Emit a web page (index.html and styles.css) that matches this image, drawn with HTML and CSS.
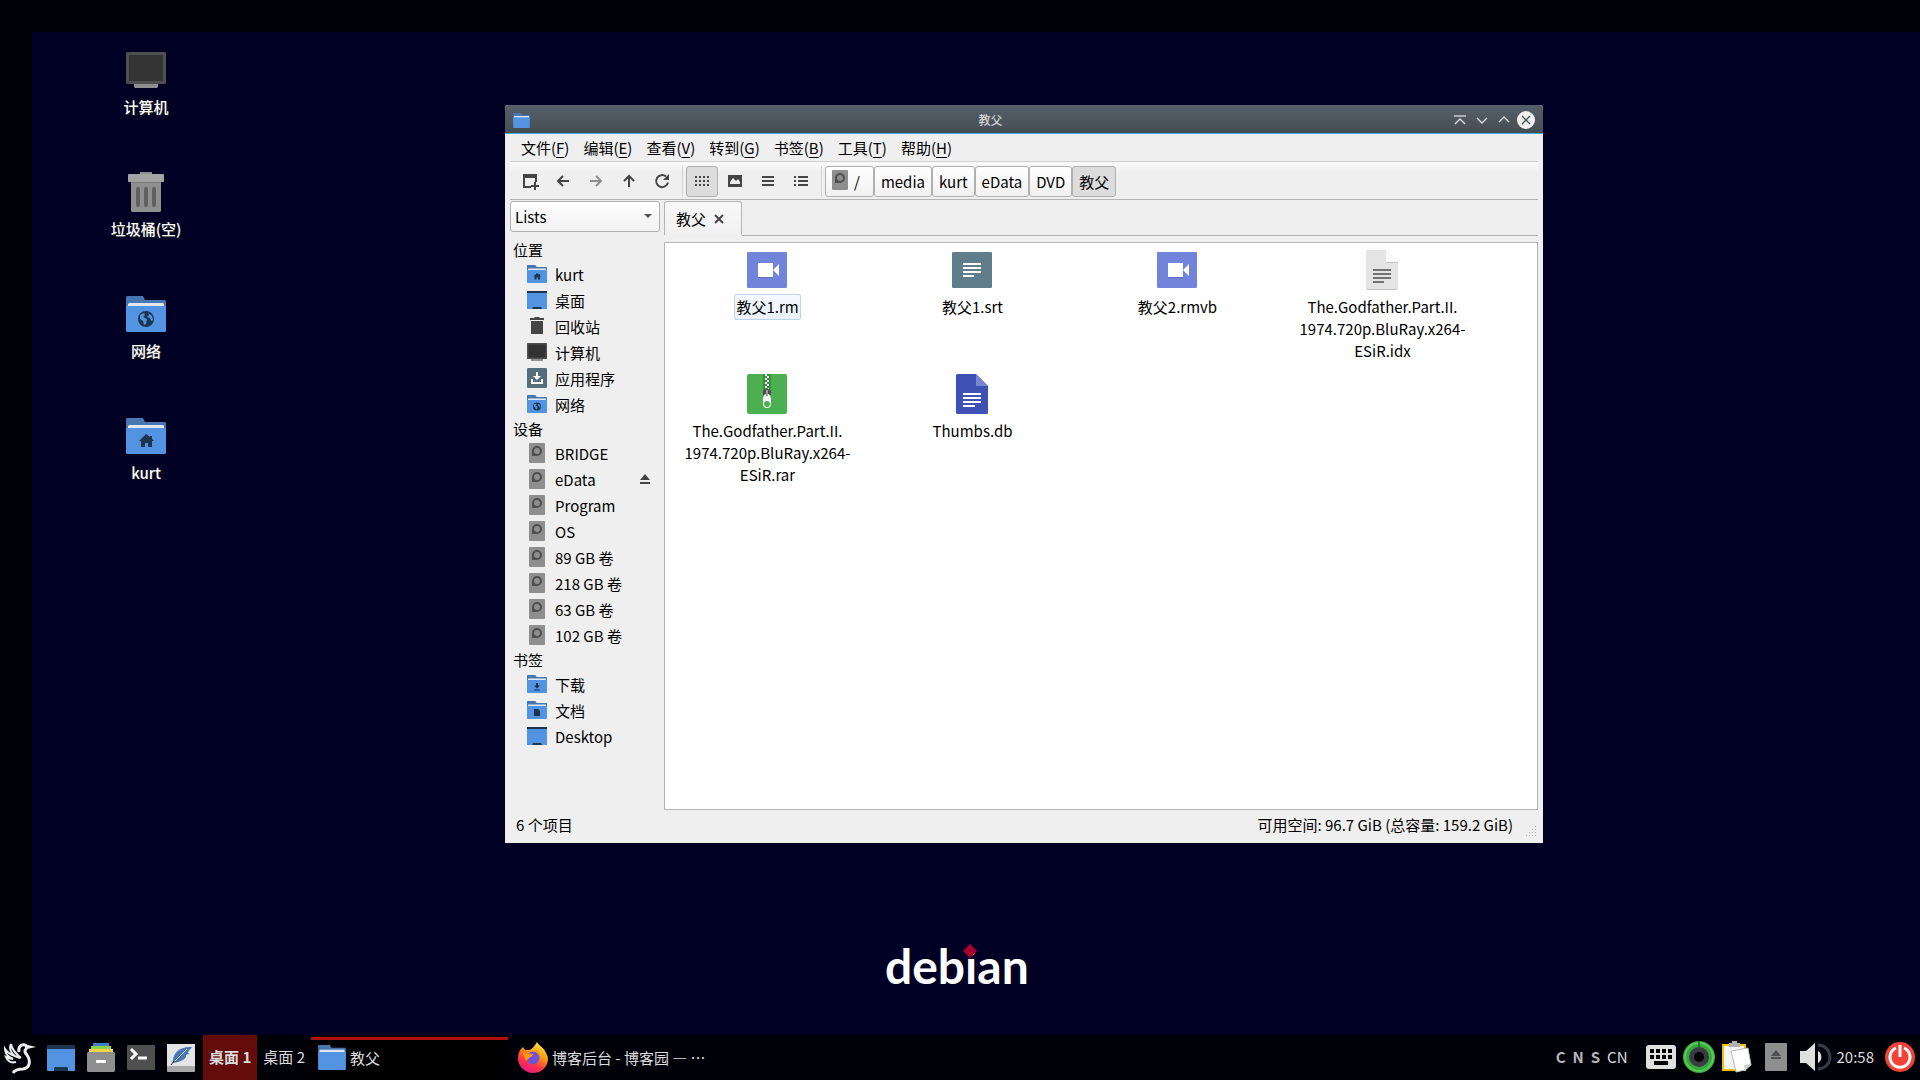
FILE: index.html
```html
<!DOCTYPE html>
<html lang="zh-CN">
<head>
    <meta charset="UTF-8">
    <meta name="viewport" content="width=device-width, initial-scale=1.0">
    <title>教父</title>
    <link rel="stylesheet" href="styles.css">
</head>
<body>

<!-- Shared icons -->
<svg class="sprite" width="0" height="0" aria-hidden="true">
    <symbol id="folder" viewBox="0 0 40 36">
        <path fill="#4877b1" d="M1 0h16l2 4h20l1 1v14H0V1z"/>
        <path fill="#e4e9f0" d="M3 7h34l1 1v4H2V8z"/>
        <path fill="#5294e2" d="M0 10h40v25l-1 1H1l-1-1z"/>
    </symbol>
    <symbol id="folder-home" viewBox="0 0 40 36">
        <use href="#folder"/>
        <path fill="#1d344f" d="M20 16l-7 7h2v6h4v-4h3v4h4v-6h2l-2-2v-3h-2v1z"/>
    </symbol>
    <symbol id="folder-net" viewBox="0 0 40 36">
        <use href="#folder"/>
        <circle cx="20" cy="23" r="8" fill="#1d344f"/>
        <path fill="#5294e2" d="M14 19l4-2 1 2-2 2 4 2-1 5-2 1-1-4-3-2zM22 17l4 3 1 4-2 1-1-3-3-1 2-2z"/>
    </symbol>
    <symbol id="folder-down" viewBox="0 0 40 36">
        <use href="#folder"/>
        <path fill="#1d344f" d="M18 16h4v5h4l-6 6-6-6h4zM14 29h12v2H14z"/>
    </symbol>
    <symbol id="folder-doc" viewBox="0 0 40 36">
        <use href="#folder"/>
        <path fill="#1d344f" d="M14 16h8l4 4v10H14z"/>
    </symbol>
    <symbol id="screen" viewBox="0 0 20 18">
        <path fill="#5294e2" d="M0 0h20v18H0z"/>
        <path fill="#1d344f" d="M0 0h20v2H0zM5 18l1-2h8l1 2z"/>
    </symbol>
    <symbol id="computer" viewBox="0 0 40 36">
        <path fill="#8e8e8e" d="M8 32h24v3l-1 1H9l-1-1z"/>
        <rect width="40" height="32" rx="1" fill="#4f4f4f"/>
        <path fill="#333" d="M3 3h34v26H3z"/>
    </symbol>
    <symbol id="disk" viewBox="0 0 16 20">
        <rect width="16" height="20" rx="1" fill="#8e8e8e"/>
        <circle cx="8" cy="8" r="4" fill="none" stroke="#4f4f4f" stroke-width="2"/>
        <path fill="#4f4f4f" d="M3 8l4 4v1H3z"/>
    </symbol>
    <symbol id="video" viewBox="0 0 40 36">
        <rect width="40" height="36" rx="1" fill="#7283da"/>
        <path fill="#5f6fbd" d="M11 12h15v14H11z"/>
        <path fill="#fff" d="M11 11h15v14H11zM26 18l6-6v12z"/>
    </symbol>
</svg>

<main class="desktop">
    <nav class="shortcuts">
        <a href="#"><svg width="40" height="36"><use href="#computer"/></svg><span>计算机</span></a>
        <a href="#">
            <svg width="40" height="40" viewBox="0 0 40 40">
                <path fill="#8e8e8e" d="M5 9h30v30l-1 1H6l-1-1zM14 0h12v3H14z"/>
                <rect x="2" y="2" width="36" height="8" rx="1" fill="#a3a3a3"/>
                <path fill="#777" d="M5 10h30v1H5z"/>
                <path stroke="#606060" stroke-width="4" stroke-linecap="round" d="M12 17v16M20 17v16M28 17v16"/>
            </svg>
            <span>垃圾桶(空)</span>
        </a>
        <a href="#"><svg width="40" height="36"><use href="#folder-net"/></svg><span>网络</span></a>
        <a href="#"><svg width="40" height="36"><use href="#folder-home"/></svg><span>kurt</span></a>
    </nav>

    <div class="logo">debian</div>

    <section class="window">
        <header class="titlebar">
            <svg width="17" height="15"><use href="#folder"/></svg>
            <h1>教父</h1>
            <div class="window-buttons">
                <button type="button" aria-label="shade"><svg width="18" height="18" fill="none" stroke="#dfe3e5"><path stroke-width="2" stroke="#a9b0b4" d="M3 5h12"/><path stroke-width="1.3" d="M4 13l5-5 5 5"/></svg></button>
                <button type="button" aria-label="minimize"><svg width="18" height="18" fill="none" stroke="#dfe3e5" stroke-width="1.3"><path d="M4 7l5 5 5-5"/></svg></button>
                <button type="button" aria-label="maximize"><svg width="18" height="18" fill="none" stroke="#dfe3e5" stroke-width="1.3"><path d="M4 11l5-5 5 5"/></svg></button>
                <button type="button" aria-label="close"><svg width="18" height="18"><circle cx="9" cy="9" r="9" fill="#eff0f1"/><path stroke="#475057" stroke-width="1.3" d="M5 5l8 8M13 5l-8 8"/></svg></button>
            </div>
        </header>

        <nav class="menubar">
            <button type="button">文件(<u>F</u>)</button>
            <button type="button">编辑(<u>E</u>)</button>
            <button type="button">查看(<u>V</u>)</button>
            <button type="button">转到(<u>G</u>)</button>
            <button type="button">书签(<u>B</u>)</button>
            <button type="button">工具(<u>T</u>)</button>
            <button type="button">帮助(<u>H</u>)</button>
        </nav>

        <div class="toolbar">
            <div class="tools">
                <button type="button" aria-label="new window"><svg width="16" height="16"><path fill="#454545" d="M1 1h14v8h-2V5H3v8h6v2H1zM12 9h2v3h3v2h-3v3h-2v-3H9v-2h3z"/></svg></button>
                <button type="button" aria-label="back"><svg width="16" height="16" fill="none" stroke="#454545" stroke-width="2"><path d="M14 8H4M8 3L3 8l5 5"/></svg></button>
                <button type="button" aria-label="forward"><svg width="16" height="16" fill="none" stroke="#8f8f8f" stroke-width="2"><path d="M2 8h10M8 3l5 5-5 5"/></svg></button>
                <button type="button" aria-label="up"><svg width="16" height="16" fill="none" stroke="#454545" stroke-width="2"><path d="M8 14V4M3 8l5-5 5 5"/></svg></button>
                <button type="button" aria-label="reload"><svg width="16" height="16"><path fill="none" stroke="#454545" stroke-width="2" d="M14 9.500a6 6 0 1 1-2-6"/><path fill="#454545" d="M15 1v6H9z"/></svg></button>
            </div>
            <div class="tools">
                <button type="button" class="active" aria-label="icons"><svg width="16" height="16"><path stroke="#454545" stroke-width="2" stroke-dasharray="2 2" d="M1 4h14M1 8h14M1 12h14"/></svg></button>
                <button type="button" aria-label="thumbnails"><svg width="16" height="16"><path fill="#454545" fill-rule="evenodd" d="M1 2h14v12H1zM3 11h10V9l-2-3-2 2-3-3-3 4z"/></svg></button>
                <button type="button" aria-label="compact"><svg width="16" height="16"><path stroke="#454545" stroke-width="2" d="M2 4h12M2 8h12M2 12h12"/></svg></button>
                <button type="button" aria-label="details"><svg width="16" height="16"><path stroke="#454545" stroke-width="2" d="M1 4h2M1 8h2M1 12h2M5 4h10M5 8h10M5 12h10"/></svg></button>
            </div>
            <div class="path">
                <button type="button"><svg width="16" height="20"><use href="#disk"/></svg>/</button>
                <button type="button">media</button>
                <button type="button">kurt</button>
                <button type="button">eData</button>
                <button type="button">DVD</button>
                <button type="button" class="active">教父</button>
            </div>
        </div>

        <div class="content">
            <aside class="sidebar">
                <div class="combo">
                    <select aria-label="side pane">
                        <option>Lists</option>
                    </select>
                </div>
                <h2>位置</h2>
                <ul>
                    <li><a href="#"><svg width="20" height="18"><use href="#folder-home"/></svg>kurt</a></li>
                    <li><a href="#"><svg width="20" height="18"><use href="#screen"/></svg>桌面</a></li>
                    <li><a href="#"><svg width="20" height="18"><path fill="#454545" d="M4 4h12v13H4zM3 1h4l1-1h4l1 1h4v2H3z"/></svg>回收站</a></li>
                    <li><a href="#"><svg width="20" height="18"><use href="#computer"/></svg>计算机</a></li>
                    <li><a href="#"><svg width="20" height="20"><rect width="20" height="20" rx="1" fill="#546e7a"/><path fill="#fff" d="M9 4h2v4h3l-4 4-4-4h3zM4 11h2v3h8v-3h2v5H4z"/></svg>应用程序</a></li>
                    <li><a href="#"><svg width="20" height="18"><use href="#folder-net"/></svg>网络</a></li>
                </ul>
                <h2>设备</h2>
                <ul>
                    <li><a href="#"><svg width="20" height="20"><use href="#disk"/></svg>BRIDGE</a></li>
                    <li>
                        <a href="#"><svg width="20" height="20"><use href="#disk"/></svg>eData</a>
                        <button type="button" class="eject" aria-label="eject"><svg width="10" height="10"><path fill="#454545" d="M5 0l5 6H0zM0 8h10v2H0z"/></svg></button>
                    </li>
                    <li><a href="#"><svg width="20" height="20"><use href="#disk"/></svg>Program</a></li>
                    <li><a href="#"><svg width="20" height="20"><use href="#disk"/></svg>OS</a></li>
                    <li><a href="#"><svg width="20" height="20"><use href="#disk"/></svg>89 GB 卷</a></li>
                    <li><a href="#"><svg width="20" height="20"><use href="#disk"/></svg>218 GB 卷</a></li>
                    <li><a href="#"><svg width="20" height="20"><use href="#disk"/></svg>63 GB 卷</a></li>
                    <li><a href="#"><svg width="20" height="20"><use href="#disk"/></svg>102 GB 卷</a></li>
                </ul>
                <h2>书签</h2>
                <ul>
                    <li><a href="#"><svg width="20" height="18"><use href="#folder-down"/></svg>下载</a></li>
                    <li><a href="#"><svg width="20" height="18"><use href="#folder-doc"/></svg>文档</a></li>
                    <li><a href="#"><svg width="20" height="18"><use href="#screen"/></svg>Desktop</a></li>
                </ul>
            </aside>

            <div class="pane">
                <div class="tabs">
                    <div class="tab">
                        <span>教父</span>
                        <button type="button" aria-label="close tab"><svg width="10" height="10"><path stroke="#454545" stroke-width="2" d="M1 1l8 8M9 1L1 9"/></svg></button>
                    </div>
                </div>
                <div class="files">
                    <a href="#" class="focused"><svg width="40" height="36"><use href="#video"/></svg><span>教父1.rm</span></a>
                    <a href="#">
                        <svg width="40" height="36"><rect width="40" height="36" rx="1" fill="#607d8b"/><path fill="#fff" d="M11 11h18v2H11zM11 15h18v2H11zM11 19h18v2H11zM11 23h11v2H11z"/></svg>
                        <span>教父1.srt</span>
                    </a>
                    <a href="#"><svg width="40" height="36"><use href="#video"/></svg><span>教父2.rmvb</span></a>
                    <a href="#">
                        <svg width="32" height="40"><path fill="#e4e4e4" d="M1 0h19l12 12v27l-1 1H1l-1-1V1z"/><path fill="#fafafa" d="M20 0l12 12H20z"/><path fill="#c0c0c0" d="M20 12h12v1H21zM1 39h30v1H1z"/><path fill="#727272" d="M7 19h18v2H7zM7 23h18v2H7zM7 27h18v2H7zM7 31h11v2H7z"/></svg>
                        <span>The.Godfather.Part.II.<br>1974.720p.BluRay.x264-<br>ESiR.idx</span>
                    </a>
                    <a href="#">
                        <svg width="40" height="40">
                            <rect width="40" height="40" rx="2" fill="#4caf50"/>
                            <path fill="#388e3c" d="M16 0h8v17h-8z"/>
                            <path stroke="#fff" stroke-width="2" stroke-dasharray="2 2" d="M19 0v16"/>
                            <path stroke="#fff" stroke-width="2" stroke-dasharray="2 2" stroke-dashoffset="2" d="M21 0v16"/>
                            <path fill="#4f4f4f" d="M16 21v-4l4-3 4 3v4z"/>
                            <path fill="#fff" d="M18 20h4l2 4v6a4 4 0 0 1-8 0v-6z"/>
                            <path fill="#9e9e9e" d="M19 16h2v6h-2z"/>
                            <circle cx="20" cy="30" r="3" fill="#4caf50"/>
                        </svg>
                        <span>The.Godfather.Part.II.<br>1974.720p.BluRay.x264-<br>ESiR.rar</span>
                    </a>
                    <a href="#">
                        <svg width="32" height="40"><path fill="#3f51b5" d="M1 0h19l12 12v27l-1 1H1l-1-1V1z"/><path fill="#7986cb" d="M20 0l12 12H20z"/><path fill="#fff" d="M7 19h18v2H7zM7 23h18v2H7zM7 27h18v2H7zM7 31h12v2H7z"/></svg>
                        <span>Thumbs.db</span>
                    </a>
                </div>
            </div>
        </div>

        <footer class="statusbar">
            <span>6 个项目</span>
            <span>可用空间: 96.7 GiB (总容量: 159.2 GiB)</span>
            <svg class="grip" width="11" height="11" fill="#b4b4b4"><path d="M9 0h1v1H9zM6 3h1v1H6zM9 3h1v1H9zM3 6h1v1H3zM6 6h1v1H6zM9 6h1v1H9zM0 9h1v1H0zM3 9h1v1H3zM6 9h1v1H6zM9 9h1v1H9z"/></svg>
        </footer>
    </section>
</main>

<footer class="panel">
    <div class="launchers">
        <button type="button" aria-label="menu">
            <svg width="34" height="34" viewBox="0 0 34 34">
                <path fill="none" stroke="#ececec" stroke-width="3" stroke-linejoin="round" d="M17 11c-1-5 2-8 6-7 2 1 2 3 1 4-2 2-1 4 1 6 4 6 3 13-4 14-5 0-8 1-10 4"/>
                <path fill="#ececec" d="M22 3l12 3-9 2z"/>
                <path fill="none" stroke="#ececec" stroke-width="2" d="M19 17C14 13 10 9 9 3M18 17C12 15 6 13 3 8c0 4 3 8 8 10-3 0-5-1-7-2 2 5 6 6 10 5M9 3c-2 4-1 8 4 12"/>
            </svg>
        </button>
        <button type="button" aria-label="show desktop"><svg width="28" height="26" viewBox="0 0 28 26"><rect width="28" height="26" rx="1" fill="#5294e2"/><path fill="#1d344f" d="M0 0h28v4H0zM7 26v-3l1-1h12l1 1v3z"/></svg></button>
        <button type="button" aria-label="file manager">
            <svg width="28" height="29">
                <path fill="#3f7fd0" d="M6 0h16v5H6z"/><path fill="#8bd346" d="M4 3h20v5H4z"/><path fill="#ffd24d" d="M2 6h24v5H2z"/>
                <path fill="#8e8e8e" d="M1 9h26l1 1v18l-1 1H1l-1-1V10z"/><rect x="9" y="17" width="10" height="3" rx="1" fill="#fff"/>
            </svg>
        </button>
        <button type="button" aria-label="terminal"><svg width="28" height="25"><rect width="28" height="25" rx="1" fill="#4f4f4f"/><path fill="none" stroke="#fff" stroke-width="3" d="M4 4l5 5-5 5M11 13h9"/></svg></button>
        <button type="button" aria-label="editor">
            <svg width="28" height="28"><rect width="28" height="28" rx="1" fill="#a8a8a8"/><path fill="#e4e4e4" d="M0 0h28v22H0z"/><path fill="#4877b1" d="M25 3C13 2 5 9 6 19c9-1 14-5 13-8l3-1-1-2z"/><path fill="none" stroke="#e4e4e4" d="M20 5L8 17"/><path fill="none" stroke="#1d344f" d="M7 17l-3 4"/></svg>
        </button>
    </div>
    <div class="pager">
        <button type="button" class="current">桌面 1</button>
        <button type="button">桌面 2</button>
    </div>
    <div class="tasks">
        <button type="button" class="current"><svg width="28" height="25"><use href="#folder"/></svg>教父</button>
        <button type="button">
            <svg width="30" height="31" viewBox="0 0 30 31">
                <defs>
                    <linearGradient id="fox" x1=".8" y1="0" x2=".3" y2="1">
                        <stop offset="0" stop-color="#fff44f"/><stop offset=".4" stop-color="#ff980e"/><stop offset=".7" stop-color="#ff3647"/><stop offset="1" stop-color="#e31587"/>
                    </linearGradient>
                </defs>
                <path fill="url(#fox)" d="M19 0c1 3 6 5 8 9 1 2 3 5 3 8 0 8-7 14-15 14S0 24 0 17C0 12 1 9 3 7l2-2 2 3h4c4-1 6-5 8-8z"/>
                <circle cx="15" cy="16" r="6.500" fill="#7153d6"/>
                <path fill="#ff980e" d="M5 11l10 1c0 3-5 3-6 7-2-3-4-5-4-8zM17 8c3 0 5 3 5 5l-2-2z"/>
            </svg>
            博客后台 - 博客园 — …
        </button>
    </div>
    <div class="tray">
        <span class="locks"><b>C</b><b>N</b><b>S</b></span>
        <span class="layout">CN</span>
        <svg width="30" height="24"><rect width="30" height="24" rx="3" fill="#e0e0e0"/><path fill="#000" d="M4 4h4v4H4zM10 4h4v4h-4zM16 4h4v4h-4zM22 4h4v4h-4zM4 10h4v4H4zM10 10h4v4h-4zM16 10h4v4h-4zM22 10h4v4h-4zM8 16h14v4H8z"/></svg>
        <svg width="32" height="32"><circle cx="16" cy="16" r="16" fill="#37a83c"/><circle cx="16" cy="16" r="14" fill="none" stroke="#56ca55" stroke-width="2"/><circle cx="16" cy="16" r="10" fill="#3b3d45"/><circle cx="16" cy="16" r="5" fill="#000"/><path stroke="#103512" d="M16 0v6"/></svg>
        <svg width="30" height="31"><path fill="#f0c000" d="M0 3h24v27H0z"/><path fill="#f4f4f4" d="M2 5h20v23H2z"/><path fill="#b0b0b0" d="M7 2h3V0h5v2h3v4H7z"/><path fill="#fff" stroke="#bbb" d="M9 10l17-3 3 17-6 5-9 2z"/><path fill="#ccc" d="M29 23l-7 1 1 6z"/></svg>
        <svg class="removable" width="22" height="28"><rect width="22" height="28" rx="1" fill="#8e8e8e"/><path fill="#4f4f4f" d="M11 7l5 6H6zM6 14h10v2H6z"/></svg>
        <svg width="30" height="28"><path fill="#e0e0e0" d="M0 8h6l9-8v28l-9-8H0z"/><path fill="#e0e0e0" d="M18 8a7 7 0 0 1 0 12z"/><path fill="none" stroke="#3a3a44" stroke-width="3" d="M18 2a12 12 0 0 1 0 24"/></svg>
        <time>20:58</time>
        <button type="button" aria-label="leave"><svg width="30" height="30"><circle cx="15" cy="15" r="15" fill="#f44336"/><path fill="none" stroke="#fff" stroke-width="3" d="M11 6a10 10 0 1 0 8 0M15 3v12"/></svg></button>
    </div>
</footer>

</body>
</html>
```

FILE: styles.css
```css
* {
    box-sizing: border-box;
}

body {
    margin: 0;
    height: 100vh;
    display: flex;
    flex-direction: column;
    background-color: #000;
    color: #000;
    font: 15px/22px "Noto Sans CJK SC", sans-serif;
    overflow: hidden;
}

button,
select {
    font: inherit;
    color: inherit;
    background: none;
    border: none;
    padding: 0;
    margin: 0;
}

a {
    color: inherit;
    text-decoration: none;
}

svg {
    display: block;
    flex: none;
    overflow: visible;
}

.sprite {
    position: absolute;
}

/* Desktop */
.desktop {
    flex: 1;
    position: relative;
    background-color: #000024;
    border: solid #000007;
    border-width: 32px 0 0 32px;
}

.shortcuts {
    display: flex;
    flex-direction: column;
    width: 228px;
    padding-top: 14px;
}

.shortcuts a {
    display: flex;
    flex-direction: column;
    align-items: center;
    height: 122px;
    color: #fff;
    font-weight: 500;
    text-shadow: 1px 1px 1px #222;
}

.shortcuts svg {
    height: 48px;
}

.shortcuts span {
    margin-top: 2px;
}

.logo {
    position: absolute;
    left: 853px;
    top: 904px;
    color: #fff;
    font: bold 48px/60px Lato, sans-serif;
}

/* Red diamond over the dot of the i */
.logo::after {
    content: "";
    position: absolute;
    left: 80px;
    top: 10px;
    width: 10px;
    height: 10px;
    background-color: #a80030;
    transform: rotate(45deg);
}

/* File manager window */
.window {
    position: absolute;
    left: 473px;
    top: 73px;
    width: 1038px;
    height: 738px;
    display: flex;
    flex-direction: column;
    background-color: #efefef;
    border-radius: 3px 3px 0 0;
}

.titlebar {
    display: flex;
    align-items: center;
    height: 29px;
    padding: 2px 8px 0;
    background: linear-gradient(#566068, #454d54);
    border-bottom: 1px solid #3daee9;
    border-radius: 3px 3px 0 0;
}

.titlebar h1 {
    flex: 1;
    margin: 0;
    color: #ccd0d2;
    font-size: 12px;
    font-weight: 500;
    text-align: center;
}

.window-buttons {
    display: flex;
    gap: 4px;
}

.menubar {
    display: flex;
    gap: 14px;
    height: 28px;
    margin: 0 5px;
    padding: 0 11px;
    border-bottom: 1px solid #cfcfcf;
}

.menubar u {
    text-underline-offset: 3px;
}

.toolbar {
    display: flex;
    align-items: center;
    height: 38px;
    margin: 0 5px;
    padding: 1px 4px 0;
    background: linear-gradient(#fafafa, #efefef 30%);
    border-bottom: 1px solid #b4b4b4;
}

.tools {
    display: flex;
    gap: 1px;
    padding-right: 4px;
    margin-right: 3px;
    border-right: 1px solid #d4d4d4;
}

.tools button {
    display: grid;
    place-items: center;
    width: 32px;
    height: 31px;
}

.path {
    display: flex;
}

.path button {
    display: flex;
    align-items: center;
    gap: 6px;
    height: 31px;
    padding: 1px 6px 0;
    border: 1px solid #b0b0b0;
    border-radius: 3px;
    background: linear-gradient(#fff, #f1f1f1);
}

.path button:first-child {
    padding-right: 13px;
}

.path svg {
    margin-bottom: 4px;
}

.tools .active,
.path .active {
    background: #dcdcdc;
    border: 1px solid #b0b0b0;
    border-radius: 3px;
}

.content {
    flex: 1;
    display: flex;
    gap: 4px;
    padding: 1px 5px 0;
}

/* Side pane */
.sidebar {
    width: 150px;
}

.combo {
    position: relative;
    margin-bottom: 7px;
}

.combo select {
    display: block;
    width: 100%;
    height: 31px;
    padding: 1px 4px 0;
    appearance: none;
    border: 1px solid #b0b0b0;
    border-radius: 3px;
    background: linear-gradient(#fff, #f1f1f1);
}

.combo::after {
    content: "";
    position: absolute;
    right: 8px;
    top: 13px;
    border: 4px solid transparent;
    border-top-color: #555;
    border-bottom: none;
}

.sidebar h2 {
    margin: 0 0 2px;
    padding-left: 3px;
    font-size: 15px;
    font-weight: 400;
    line-height: 21px;
}

.sidebar ul {
    list-style: none;
    margin: 0;
    padding: 0 10px 0 17px;
}

.sidebar li,
.sidebar li a {
    display: flex;
    align-items: center;
    height: 26px;
}

.sidebar li a {
    flex: 1;
    gap: 8px;
}

.sidebar li svg {
    margin-bottom: 3px;
}

/* Tabs and file list */
.pane {
    flex: 1;
    display: flex;
    flex-direction: column;
}

.tabs {
    display: flex;
    height: 41px;
}

.tabs::after {
    content: "";
    flex: 1;
    height: 34px;
    border-bottom: 1px solid #b4b4b4;
}

.tab {
    display: flex;
    align-items: center;
    gap: 8px;
    height: 34px;
    padding: 0 17px 0 11px;
    border: 1px solid #b4b4b4;
    border-bottom: none;
    border-radius: 3px 3px 0 0;
    background: linear-gradient(#f8f8f8, #f1f1f1);
}

.files {
    flex: 1;
    display: grid;
    grid-template-columns: repeat(auto-fill, 205px);
    grid-auto-rows: 124px;
    padding-top: 3px;
    background-color: #fff;
    border: 1px solid #b4b4b4;
}

.files a {
    display: flex;
    flex-direction: column;
    align-items: center;
    text-align: center;
}

.files svg {
    margin: 6px 1px 6px 0;
}

.files svg[height="40"] {
    margin: 4px 1px 4px 0;
}

.files span {
    padding: 1px;
    border: 1px solid transparent;
    border-radius: 2px;
}

.files .focused span {
    background: linear-gradient(#f6f9fe, #eaf2fb);
    border-color: #bcd3ea;
}

.statusbar {
    display: flex;
    justify-content: space-between;
    align-items: center;
    position: relative;
    height: 33px;
    padding: 0 30px 4px 11px;
}

.grip {
    position: absolute;
    right: 6px;
    bottom: 6px;
}

/* Bottom panel */
.panel {
    display: flex;
    height: 45px;
    background-color: #000008;
    color: #dcdcdc;
}

.launchers {
    display: flex;
    align-items: center;
    gap: 12px;
    padding: 0 8px 0 2px;
}

.launchers button:first-child {
    margin-right: -1px;
}

.pager {
    display: flex;
}

.pager button {
    padding: 0 6px 2px;
}

.pager .current {
    background-color: #640c0c;
    font-weight: 700;
}

.tasks {
    flex: 1;
    display: flex;
    gap: 3px;
}

.tasks button {
    display: flex;
    align-items: center;
    gap: 4px;
    width: 197px;
    margin-top: 2px;
    padding: 0 7px 5px;
    border-top: 3px solid transparent;
    white-space: nowrap;
}

.tasks .current {
    background-color: #000;
    border-color: #b01010;
}

.tray {
    display: flex;
    align-items: center;
    gap: 7px;
    padding: 0 5px 2px 0;
}

.locks {
    display: flex;
    gap: 7px;
    color: #b4b4b4;
}

.layout {
    margin-right: 11px;
}

.removable {
    margin: 0 6px;
}

.tray time {
    margin-right: 4px;
}
```
